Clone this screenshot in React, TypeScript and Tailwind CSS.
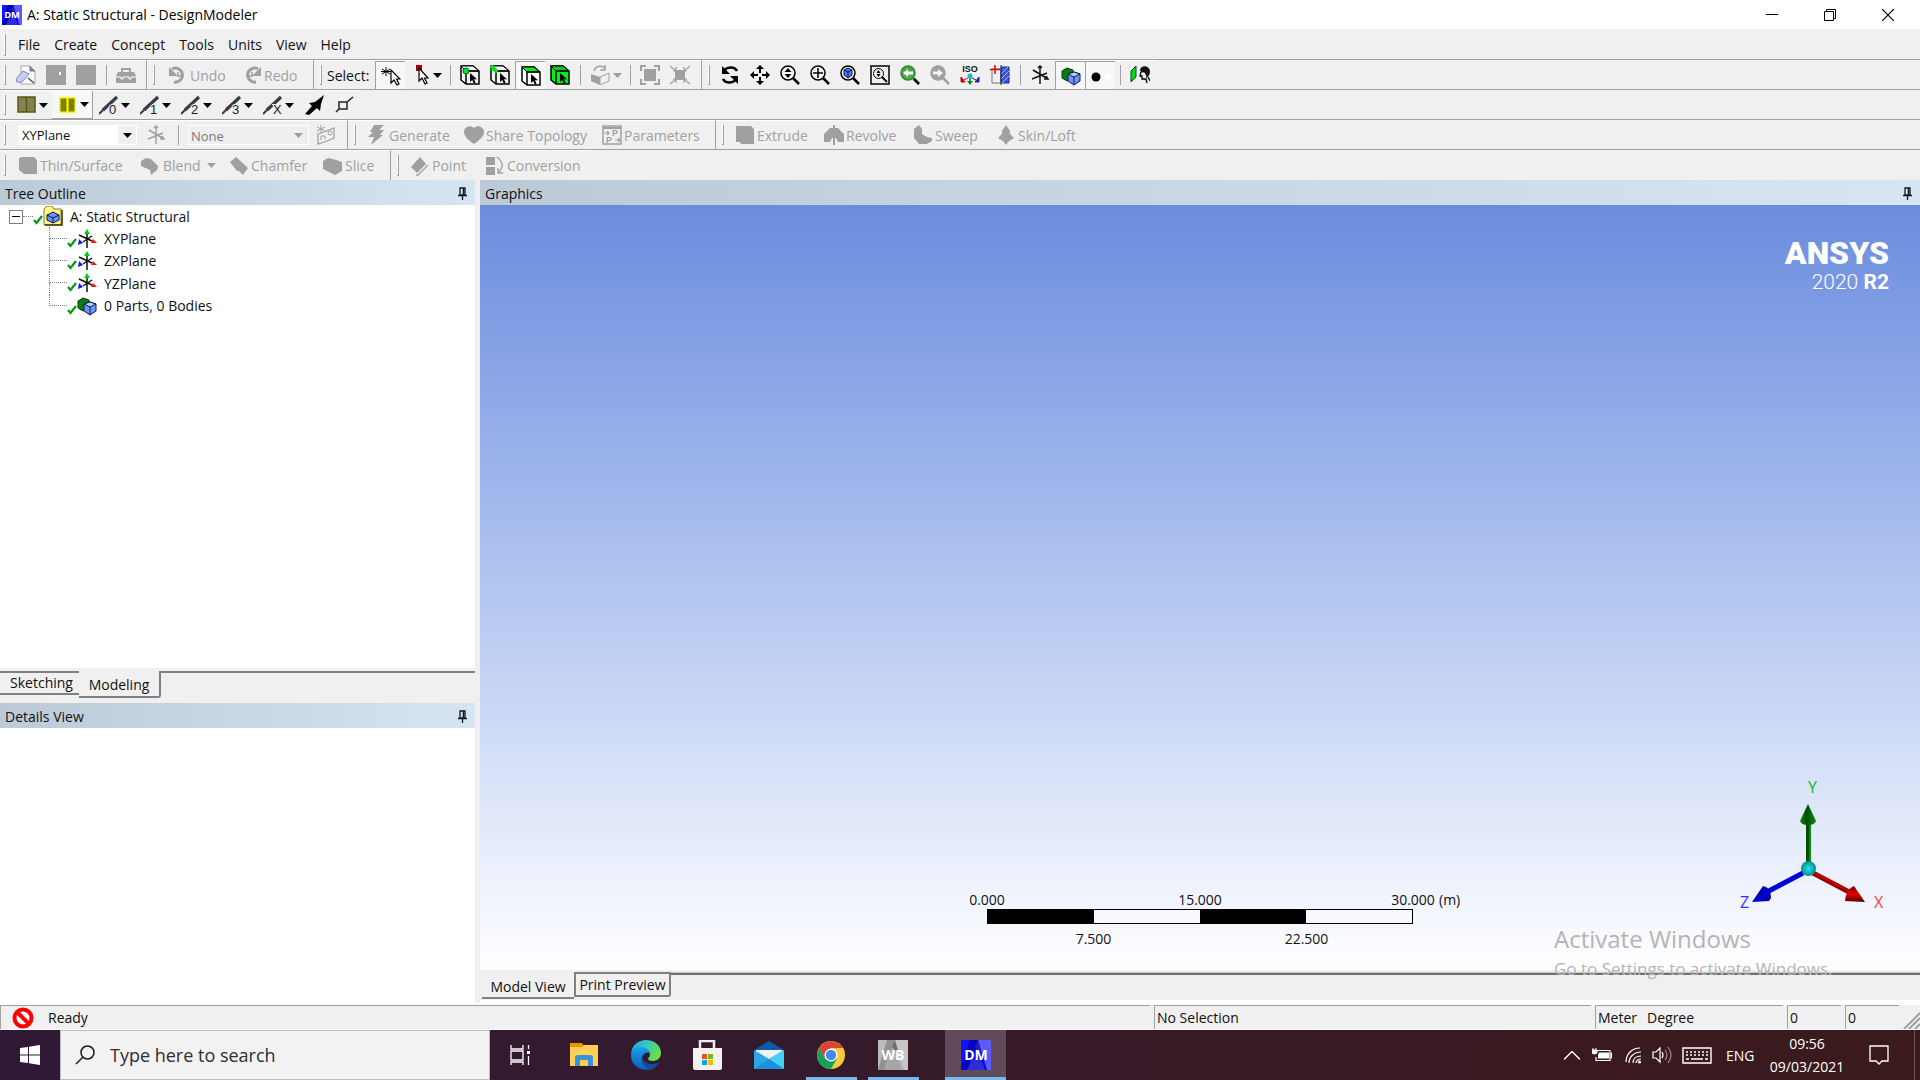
import type { ReactNode } from "react";

const GREY = "#a0a0a0";

/* ---------- helpers ---------- */

function Ico({ children, size = 20 }: { children: ReactNode; size?: number }) {
  return (
    <svg width={size} height={size} viewBox="0 0 20 20" fill="none" className="shrink-0" aria-hidden="true">
      {children}
    </svg>
  );
}

function Arrow({ color = "#000" }: { color?: string }) {
  return (
    <svg width="9" height="5" viewBox="0 0 9 5" className="shrink-0" aria-hidden="true">
      <path d="M0 0h9L4.500 5z" fill={color} />
    </svg>
  );
}

function Row({ children, last }: { children: ReactNode; last?: boolean }) {
  return (
    <div className={last ? "flex h-[30px] items-stretch" : "flex h-[30px] items-stretch border-b border-[#a0a0a0]"}>
      {children}
    </div>
  );
}

function Grip() {
  return <span className="my-1 ml-1 mr-[5px] w-[2px] shrink-0 border-r border-b border-[#a0a0a0] bg-white" />;
}

function Group({ children, open }: { children: ReactNode; open?: boolean }) {
  return (
    <div className={open ? "flex items-stretch border-t border-white" : "mr-[2px] flex items-stretch border-t border-r border-white border-r-[#a0a0a0]"}>
      <Grip />
      {children}
    </div>
  );
}

function Sep() {
  return (
    <span className="flex w-[10px] shrink-0 justify-center py-1">
      <span className="w-px bg-[#a0a0a0]" />
    </span>
  );
}

function Btn({ label, children, pressed }: { label: string; children: ReactNode; pressed?: boolean }) {
  return (
    <button
      type="button"
      aria-label={label}
      className={
        pressed
          ? "flex w-[30px] shrink-0 items-center justify-center border-t border-l border-[#a0a0a0] bg-[#f7f7f7]"
          : "flex w-[30px] shrink-0 items-center justify-center"
      }
    >
      <Ico>{children}</Ico>
    </button>
  );
}

function Drop({ label, children, width, raised, off }: { label: string; children: ReactNode; width: string; raised?: boolean; off?: boolean }) {
  return (
    <button
      type="button"
      aria-label={label}
      className={`flex shrink-0 items-center gap-[2px] pl-[6px] ${width} ${raised ? "border-r border-b border-[#a0a0a0] bg-[#f7f7f7]" : ""}`}
    >
      <Ico>{children}</Ico>
      <Arrow color={off ? GREY : "#000"} />
    </button>
  );
}

function TextBtn({ label, children, width, drop }: { label: string; children: ReactNode; width: string; drop?: boolean }) {
  return (
    <button
      type="button"
      className={`flex shrink-0 items-center gap-[2px] whitespace-nowrap pl-[6px] text-[14px] text-[#a0a0a0] ${width}`}
    >
      <Ico>{children}</Ico>
      <span>{label}</span>
      {drop && <span className="ml-1"><Arrow color={GREY} /></span>}
    </button>
  );
}

/* ---------- icon drawings ---------- */

const cursor = (x: number, y: number) => (
  <path transform={`translate(${x} ${y})`} d="M0 0v9l2.200-2 1.600 3.500 1.800-.8-1.600-3.400h3z" fill="#000" />
);

function SelectCube({ front = "#f0f0f0", top = "#f0f0f0", children }: { front?: string; top?: string; children?: ReactNode }) {
  return (
    <>
      <path d="M1 1h12l6 5v13H6l-5-4z" fill={front} stroke="#000" strokeWidth="1.500" />
      <path d="M1 1h12l6 5H6z" fill={top} stroke="#000" strokeWidth="1" />
      <path d="M6 6v13M6 6h13" stroke="#000" strokeWidth="1.500" />
      {children}
      {cursor(10, 8)}
    </>
  );
}

function Lens({ color = "#000", fill = "#f4f4f4", children }: { color?: string; fill?: string; children?: ReactNode }) {
  return (
    <>
      <circle cx="8" cy="8" r="7" fill={fill} stroke={color} strokeWidth="1.500" />
      <path d="M13 13l6 6" stroke={color} strokeWidth="2.500" />
      {children}
    </>
  );
}

function UpDown() {
  return <path d="M8 3l3.500 4h-7zM8 13l3.500-4h-7z" fill="#000" />;
}

function Cubes() {
  return (
    <>
      <path d="M1 5l5-3 6 2v8l-6 3-5-3z" fill="#0a7a12" stroke="#063d08" />
      <path d="M7 8l6-2 6 2v7l-6 4-6-4z" fill="#6a96fb" stroke="#101a50" />
      <path d="M7 8l6 3 6-3-6-2z" fill="#b6cbff" stroke="#101a50" />
      <path d="M13 11v8" stroke="#101a50" />
    </>
  );
}

function PlaneAxes() {
  return (
    <>
      <path d="M10 5v14M2 6l13 6M15 7l-9 6" stroke="#111" strokeWidth="1.500" />
      <path d="M10 0l3 5H7z" fill="#00c81e" />
      <path d="M20 14l-6 0 2-4z" fill="#f01414" />
      <path d="M1 16l1-6 4 4z" fill="#1414f0" />
    </>
  );
}

function Axes({ color }: { color: string }) {
  return <path d="M10 1v18M3 5l15 9M2 14l15-6M8 3l2-2 2 2M16 11l2 3-4 0" stroke={color} strokeWidth="1.500" />;
}

function Edge({ mark }: { mark: string }) {
  return (
    <>
      <path d="M4 15L18 2" stroke="#3c3c3c" strokeWidth="3.200" />
      <path d="M0 19L8 11" stroke="#3c3c3c" strokeWidth="2" />
      <text x="10" y="19" fontSize="13" fill="#222" stroke="#efefef" strokeWidth="2" paintOrder="stroke" fontFamily="Liberation Sans, sans-serif">{mark}</text>
    </>
  );
}

function Pin() {
  return (
    <svg width="10" height="14" viewBox="0 0 10 14" fill="none" aria-hidden="true">
      <path d="M3 1h5v7H3zM1 8.500h9M5.500 9v4" stroke="#15152a" strokeWidth="1.300" />
      <path d="M6.500 1v7" stroke="#15152a" strokeWidth="1.500" />
    </svg>
  );
}

function Check() {
  return (
    <svg width="10" height="10" viewBox="0 0 10 10" fill="none" className="mt-2 shrink-0" aria-hidden="true">
      <path d="M1 5l2.500 3L9 1" stroke="#0a9a14" strokeWidth="2.300" />
    </svg>
  );
}

function LogoTile({ text, size, grey }: { text: string; size: number; grey?: boolean }) {
  return (
    <svg width={size} height={size} viewBox="0 0 30 30" className="shrink-0" aria-hidden="true">
      <path d="M0 0h30v30H0z" fill={grey ? "#b4b4b4" : "#0606e8"} />
      <path d="M17 0h13v30H26z" fill={grey ? "#c6c6c6" : "#5a5aff"} />
      <path d="M9 0h8L6 30H0z" fill={grey ? "#919191" : "#0404b8"} />
      <path d="M0 0h9L0 26z" fill={grey ? "#bcbcbc" : "#1212ff"} />
      <path d="M17 0l4 14-4-3-3-4z" fill={grey ? "#6e6e6e" : "#2222a8"} />
      <path d="M6 30l5-11h9l4 11z" fill={grey ? "#a6a6a6" : "#2d2dd8"} />
      <text x="15" y="20" fontSize="14" fontWeight="700" textAnchor="middle" fill="#fff" fontFamily="Open Sans, sans-serif">{text}</text>
    </svg>
  );
}

/* ---------- panels ---------- */

function PanelHeader({ title }: { title: string }) {
  return (
    <header className="flex h-[25px] shrink-0 items-center justify-between bg-linear-to-r from-[#bccad8] to-[#d7e5f2] pt-[2px] pr-2 pl-[5px] text-[14px]">
      <h2>{title}</h2>
      <button type="button" aria-label={`Pin ${title}`}><Pin /></button>
    </header>
  );
}

function TreeItem({ label, children, last }: { label: string; children: ReactNode; last?: boolean }) {
  return (
    <li className="flex items-stretch pl-[49px]">
      <span className="flex w-[18px] shrink-0 flex-col">
        <span className="h-1/2 border-b border-l border-dotted border-[#808080]" />
        <span className={last ? "h-1/2" : "h-1/2 border-l border-dotted border-[#808080]"} />
      </span>
      <span className="flex items-center">
        <Check />
        <Ico>{children}</Ico>
        <span className="ml-[7px]">{label}</span>
      </span>
    </li>
  );
}

const menus = ["File", "Create", "Concept", "Tools", "Units", "View", "Help"];
const edges = ["0", "1", "2", "3", "X"];

function Toolbars() {
  return (
    <>
      <div className="flex h-[31px] items-stretch border-b border-[#a0a0a0]">
        <nav className="flex items-center pt-px text-[14px]">
          <span className="mr-[12px] ml-1 h-[22px] w-[2px] border-r border-b border-[#a0a0a0] bg-white" />
          <ul className="flex gap-[14px]">
            {menus.map((m) => (
              <li key={m}><button type="button">{m}</button></li>
            ))}
          </ul>
        </nav>
      </div>

      <Row>
        <Group>
          <Btn label="New">
            <path d="M5 1h9l5 5v13H5z" fill="#fafafa" stroke="#a8a8a8" />
            <path d="M14 1v5h5" fill="#888" stroke="#777" />
            <path d="M0 14l7-8 6 3-7 8-5 0z" fill="#c9cdf0" stroke="#8085b8" />
            <path d="M12 13l6 5" stroke="#555" strokeWidth="1.500" />
          </Btn>
          <Btn label="Open"><path d="M0 0h20v20H0z" fill={GREY} /><path d="M13 7h2v3h-2z" fill="#fff" /></Btn>
          <Btn label="Save"><path d="M0 0h20v20H0z" fill={GREY} /></Btn>
          <Sep />
          <Btn label="Toolbox">
            <path d="M6 8V4h8v4" stroke={GREY} strokeWidth="2" />
            <path d="M2 7h16l2 4v7H0v-7z" fill={GREY} />
            <path d="M0 12h5v2h2v-2h6v2h2v-2h5" stroke="#fff" />
          </Btn>
          <span className="w-[5px]" />
        </Group>
        <Group>
          <span className="w-[2px]" />
          <TextBtn label="Undo" width="w-[74px]">
            <path d="M4 4a7 7 0 1 1 2 13" stroke={GREY} strokeWidth="3" />
            <path d="M1 2v9h9z" fill={GREY} /><path d="M10 7v4h3" stroke={GREY} strokeWidth="1.500" />
          </TextBtn>
          <TextBtn label="Redo" width="w-[77px]">
            <path d="M16 4a7 7 0 1 0-2 13" stroke={GREY} strokeWidth="3" />
            <path d="M19 2v9h-9z" fill={GREY} /><path d="M10 7v4H7" stroke={GREY} strokeWidth="1.500" />
          </TextBtn>
        </Group>
        <Group>
          <span className="flex w-[48px] shrink-0 items-center text-[14px]">Select:</span>
          <Btn label="New selection" pressed>
            <path d="M5 1v9M1 3l8 5M9 3L1 8M0 5.500h10" stroke="#000" strokeWidth="1" />
            <path d="M10 4v13l3-3 3 5 2-1-2.500-5H19z" fill="#fff" stroke="#000" strokeWidth="1.200" />
          </Btn>
          <Drop label="Selection mode" width="w-[40px]">
            <path d="M5 0h6v6H5z" fill="#b00000" />
            <path d="M8 3v13l3-3 3 6 2-1-2.500-5H17z" fill="#fff" stroke="#000" strokeWidth="1.200" />
          </Drop>
          <Sep />
          <Btn label="Select points"><SelectCube><circle cx="6" cy="6" r="3" fill="#00e614" stroke="#063" /></SelectCube></Btn>
          <Btn label="Select edges"><SelectCube><path d="M1 1l6 6" stroke="#00e614" strokeWidth="4" /></SelectCube></Btn>
          <Btn label="Select faces" pressed><SelectCube front="#fff" top="#00f014" /></Btn>
          <Btn label="Select bodies"><SelectCube front="#00f014" top="#00d010" /></Btn>
          <Sep />
          <Drop label="Extend selection" width="w-[40px]" off>
            <path d="M0 9l9 3v8l-9-4z" fill={GREY} /><path d="M9 12l9-4v8l-9 4z" stroke={GREY} />
            <path d="M3 6c2-6 9-6 11-2M14 0v5h-5" stroke={GREY} strokeWidth="1.500" />
          </Drop>
          <Sep />
          <Btn label="Expand">
            <path d="M4 4h12v12H4z" fill={GREY} />
            <path d="M1 6V1h5M14 1h5v5M19 14v5h-5M6 19H1v-5" stroke={GREY} strokeWidth="2" />
          </Btn>
          <Btn label="Shrink">
            <path d="M5 5h10v10H5z" fill={GREY} />
            <path d="M0 1l6 5M20 1l-6 5M0 19l6-5M20 19l-6-5M3 6h3V2M17 6h-3V2M3 14h3v4M17 14h-3v4" stroke={GREY} strokeWidth="1.200" />
          </Btn>
          <span className="w-[6px]" />
        </Group>
        <Group open>
          <Btn label="Rotate">
            <path d="M4 5c5-4 11-3 13 1M16 15c-5 4-11 3-13-1" stroke="#000" strokeWidth="2.500" />
            <path d="M2 1v8h8zM18 19v-8h-8z" fill="#000" />
          </Btn>
          <Btn label="Pan">
            <path d="M10 0l4 4H6zM10 20l4-4H6zM0 10l4-4v8zM20 10l-4-4v8z" fill="#000" />
            <path d="M10 4v4M10 12v4M4 10h4M12 10h4" stroke="#000" strokeWidth="2" />
          </Btn>
          <Btn label="Zoom"><Lens><UpDown /></Lens></Btn>
          <Btn label="Box zoom"><Lens><path d="M8 3v10M3 8h10" stroke="#000" strokeWidth="1.500" /></Lens></Btn>
          <Btn label="Zoom to fit">
            <Lens>
              <path d="M4 5l4-2 4 2v5l-4 3-4-3z" fill="#4a7af0" stroke="#0a1550" />
              <path d="M4 5l4 2 4-2M8 7v6" stroke="#0a1550" />
            </Lens>
          </Btn>
          <Btn label="Magnifier window">
            <path d="M1 1h18v18H1z" stroke="#000" strokeWidth="1.500" />
            <circle cx="8.500" cy="8.500" r="5" stroke="#000" /><path d="M12 12l5 5" stroke="#000" strokeWidth="1.800" />
            <path d="M8.500 5l2 3h-4zM8.500 12l2-3h-4z" fill="#000" />
          </Btn>
          <Btn label="Previous view">
            <Lens color="#2f8a2c" fill="#4ca844" />
            <path d="M3 8l5-4v2.500h5v3H8V12z" fill="#fff" /><path d="M14 14l5 5" stroke="#111" strokeWidth="2.500" />
          </Btn>
          <Btn label="Next view">
            <Lens color={GREY} fill={GREY} /><path d="M13 8L8 4v2.500H3v3h5V12z" fill="#f4f4f4" />
          </Btn>
          <Btn label="Isometric view">
            <text x="10" y="7" fontSize="9" fontWeight="700" textAnchor="middle" fill="#111" fontFamily="Liberation Sans, sans-serif">ISO</text>
            <circle cx="10" cy="11" r="2.500" fill="#18b8c8" />
            <path d="M10 13v3" stroke="#0a8a14" strokeWidth="1.500" /><path d="M7 16h6l-3 4z" fill="#0a8a14" />
            <path d="M8 13l-4 2M1 12v5h4z" stroke="#c00" fill="#c00" /><path d="M12 13l4 2M19 12v5h-4z" stroke="#12b" fill="#12b" />
          </Btn>
          <Btn label="Display plane">
            <path d="M2 4h9v14H2z" stroke="#777" /><path d="M11 2h8v16h-8z" fill="#3a55d8" stroke="#122a90" />
            <path d="M11 9l7-7M11 14l8-8M12 18l7-7" stroke="#a8bafa" />
            <path d="M5 0v9M0 4.500h10" stroke="#e00000" strokeWidth="1.500" /><path d="M11 0v20" stroke="#333" />
          </Btn>
          <Sep />
          <Btn label="Display axes"><Axes color="#111" /></Btn>
          <Btn label="Display model" pressed><Cubes /></Btn>
          <Btn label="Display points" pressed><circle cx="5" cy="11" r="4.500" fill="#000" /><circle cx="17" cy="11" r="4" fill="#fff" /></Btn>
          <Sep />
          <Btn label="Look at face">
            <path d="M1 6l5-5v11l-5 5z" fill="#00d81a" stroke="#042" />
            <path d="M11 7l-1 4h2v3h4l1 4M18 12l2 4" stroke="#000" strokeWidth="1.300" />
            <path d="M10 5c1-5 9-5 10 1 0 4-2 6-4 7 1-3-1-4-2-6-1 1-3 1-4-2z" fill="#111" />
          </Btn>
        </Group>
      </Row>

      <Row>
        <Group open>
          <Drop label="Face colour" width="w-[41px]">
            <path d="M1 2h17v15H1z" fill="#82825a" stroke="#5a5a00" strokeWidth="1.500" /><path d="M9.500 2v15" stroke="#5a5a00" strokeWidth="1.500" />
          </Drop>
          <Drop label="Edge colour" width="w-[41px]" raised>
            <path d="M1 2h17v16H1z" fill="#ffff00" /><path d="M2.500 3.500h6v13h-6zM10.500 3.500h6v13h-6z" fill="#808000" />
          </Drop>
          {edges.map((e) => (
            <Drop key={e} label={`Edge ${e}`} width="w-[41px]"><Edge mark={e} /></Drop>
          ))}
          <span className="w-[2px]" />
          <Btn label="Edge direction"><path d="M0 19l7-8-3-3 6-1 9-7-3 9-1 7-3-3-8 7z" fill="#000" /></Btn>
          <Btn label="Show vertices"><path d="M4 7h8v7H4zM1 17l3-3M12 7l6-5" stroke="#222" strokeWidth="1.500" /></Btn>
        </Group>
      </Row>

      <Row>
        <Group>
          <span className="relative my-1 ml-[7px] flex w-[119px] shrink-0">
            <select aria-label="Active plane" className="w-full appearance-none bg-white pt-px pl-1 text-[13px]" defaultValue="XYPlane">
              <option>XYPlane</option>
            </select>
            <span className="pointer-events-none absolute top-px right-px bottom-px flex w-[18px] items-center justify-center bg-[#efefef]"><Arrow /></span>
          </span>
          <span className="w-[4px]" />
          <Btn label="New plane"><Axes color={GREY} /></Btn>
          <span className="w-[2px]" />
          <Sep />
          <span className="relative my-1 ml-[5px] flex w-[121px] shrink-0">
            <select aria-label="Active sketch" disabled className="w-full appearance-none border border-white bg-[#efefef] pt-px pl-[2px] text-[13px] text-[#7a7a7a] opacity-100" defaultValue="None">
              <option>None</option>
            </select>
            <span className="pointer-events-none absolute top-0 right-[6px] bottom-0 flex items-center"><Arrow color={GREY} /></span>
          </span>
          <span className="w-[2px]" />
          <Btn label="New sketch">
            <path d="M2 9l6-2 10-4v10l-7 3-9 3z" stroke={GREY} strokeWidth="1.300" /><circle cx="14" cy="8" r="2" stroke={GREY} />
            <path d="M5 0v8M1 2l8 4M9 2L1 6" stroke={GREY} /><path d="M5 15v-4h4v3" stroke={GREY} />
          </Btn>
          <span className="w-[6px]" />
        </Group>
        <Group>
          <TextBtn label="Generate" width="w-[97px]"><path d="M7 0h10l-5 5h5l-4 5h3L4 20l3-8H1l5-5H3z" fill={GREY} /></TextBtn>
          <TextBtn label="Share Topology" width="w-[138px]"><path d="M10 3c4-4 10-1 10 4 0 4-4 8-10 12C4 15 0 11 0 7 0 2 6-1 10 3z" fill={GREY} /></TextBtn>
          <TextBtn label="Parameters" width="w-[119px]">
            <path d="M1 1h18v18H1z" stroke={GREY} strokeWidth="1.500" /><path d="M1 3h18" stroke={GREY} strokeWidth="2" />
            <path d="M2 8h5M5 6l2 2-2 2M13 15h5M16 13l2 2-2 2" stroke={GREY} strokeWidth="1.200" />
            <text x="10" y="11" fontSize="9" fontWeight="700" fill={GREY} fontFamily="Liberation Sans, sans-serif">P</text>
            <text x="4" y="18" fontSize="9" fontWeight="700" fill={GREY} fontFamily="Liberation Sans, sans-serif">P</text>
          </TextBtn>
        </Group>
        <Group open>
          <TextBtn label="Extrude" width="w-[89px]"><path d="M1 1h15l3 3v15H6l-1-2H1z" fill={GREY} /></TextBtn>
          <TextBtn label="Revolve" width="w-[89px]"><path d="M0 17v-8l6-6h3V0h2v3h3l6 6v8h-6l-2-4h-1v7h-2v-7H8l-2 4z" fill={GREY} /></TextBtn>
          <TextBtn label="Sweep" width="w-[83px]"><path d="M1 4l5-4 3 4v5l5 3 5 1v3l-5 3H6l-5-6z" fill={GREY} /></TextBtn>
          <TextBtn label="Skin/Loft" width="w-[90px]"><path d="M10 0l4 6v3l4 4-5 3-3 4-3-4-5-3 4-4V6z" fill={GREY} /></TextBtn>
        </Group>
      </Row>

      <Row last>
        <Group>
          <span className="w-[1px]" />
          <TextBtn label="Thin/Surface" width="w-[123px]"><path d="M1 2l3-1h12l3 3v14H6l-5-4z" fill={GREY} /></TextBtn>
          <TextBtn label="Blend" width="w-[88px]" drop><path d="M0 5l5-3 5 1 7 7-1 4-6 5-1-5-9-4z" fill={GREY} /></TextBtn>
          <TextBtn label="Chamfer" width="w-[94px]"><path d="M1 6l6-5 12 11-5 7-4-4-2 0z" fill={GREY} /></TextBtn>
          <TextBtn label="Slice" width="w-[73px]"><path d="M0 5l5-3 5 1 9 3v9l-7 4-6-3-6-3z" fill={GREY} /></TextBtn>
        </Group>
        <Group open>
          <TextBtn label="Point" width="w-[75px]"><path d="M1 11L10 1l6 7-9 9z" fill={GREY} /><path d="M6 19l2 0L18 9" stroke={GREY} strokeWidth="1.300" /></TextBtn>
          <TextBtn label="Conversion" width="w-[110px]">
            <path d="M1 1h9v8H1zM1 11h9v8H1z" fill={GREY} /><path d="M12 1c6 5 7 9 2 15M13 12v5h5" stroke={GREY} strokeWidth="1.300" />
          </TextBtn>
        </Group>
      </Row>
    </>
  );
}

function LeftPane() {
  return (
    <div className="flex w-[475px] shrink-0 flex-col">
      <PanelHeader title="Tree Outline" />
      <section className="flex flex-1 flex-col bg-white text-[14px]">
        <ul className="grid h-[112px] grid-rows-5">
          <li className="flex items-center pl-[9px]">
            <button type="button" aria-label="Collapse" className="mt-px flex h-[14px] w-[14px] items-center justify-center border border-[#808080] bg-white">
              <span className="h-px w-2 bg-black" />
            </button>
            <span className="w-[10px] border-t border-dotted border-[#808080]" />
            <Check />
            <Ico>
              <path d="M1 3l3-3h5l2 3h7v16H1z" fill="#fff68c" stroke="#8a7a10" /><path d="M19 4v15H2" stroke="#3c3408" strokeWidth="1.500" />
              <path d="M4 9l6-3 6 3v5l-6 3-6-3z" fill="#6a96fb" stroke="#0a1550" /><path d="M4 9l6 3 6-3M10 12v5" stroke="#0a1550" />
            </Ico>
            <span className="ml-[7px]">A: Static Structural</span>
          </li>
          <TreeItem label="XYPlane"><PlaneAxes /></TreeItem>
          <TreeItem label="ZXPlane"><PlaneAxes /></TreeItem>
          <TreeItem label="YZPlane"><PlaneAxes /></TreeItem>
          <TreeItem label="0 Parts, 0 Bodies" last><Cubes /></TreeItem>
        </ul>
      </section>
      <div className="flex h-[35px] shrink-0 items-start pt-[3px] text-[14px]">
        <button type="button" className="h-[24px] w-[79px] border-t-2 border-b-2 border-[#808080] pl-1 leading-[20px]">Sketching</button>
        <button type="button" className="h-[27px] w-[82px] rounded-br-[3px] border-r-2 border-b-2 border-[#808080] pt-[3px] leading-[20px]">Modeling</button>
        <span className="h-[2px] flex-1 bg-[#808080]" />
      </div>
      <PanelHeader title="Details View" />
      <section className="h-[275px] shrink-0 bg-white" />
    </div>
  );
}

function ScaleBar() {
  return (
    <div className="absolute bottom-[22px] left-1/2 w-[426px] -translate-x-1/2 text-[14px] leading-[18px]">
      <div className="flex justify-between">
        <span className="flex w-0 justify-center">0.000</span>
        <span className="flex w-0 justify-center">15.000</span>
        <span className="relative flex w-0 justify-center">30.000<span className="absolute left-[26px]">(m)</span></span>
      </div>
      <div className="grid h-[15px] grid-cols-4 border border-black bg-[#f8f9fe]">
        <span className="bg-black" /><span /><span className="bg-black" /><span />
      </div>
      <div className="flex justify-around pt-[6px]">
        <span className="flex w-0 justify-center">7.500</span>
        <span className="flex w-0 justify-center">22.500</span>
      </div>
    </div>
  );
}

function Triad() {
  return (
    <svg width="150" height="146" viewBox="0 -10 150 146" className="absolute right-[33px] bottom-[50px]" role="img" aria-label="Coordinate axes">
      <defs>
        <linearGradient id="gy"><stop offset="0" stopColor="#0a9a0a" /><stop offset=".4" stopColor="#004a00" /><stop offset="1" stopColor="#0a9010" /></linearGradient>
        <linearGradient id="gx" x2="0" y2="1"><stop offset="0" stopColor="#700000" /><stop offset=".5" stopColor="#e80000" /><stop offset="1" stopColor="#500000" /></linearGradient>
        <linearGradient id="gz" x2="1" y2="1"><stop offset="0" stopColor="#000080" /><stop offset=".6" stopColor="#0000d0" /><stop offset="1" stopColor="#000070" /></linearGradient>
        <radialGradient id="gs"><stop offset="0" stopColor="#20e8e8" /><stop offset="1" stopColor="#068a90" /></radialGradient>
      </defs>
      <path d="M69 40h5v45h-5z" fill="#004d00" /><path d="M72 40h2v45h-2z" fill="#0a8a10" />
      <path d="M71 20l8 17q-1 4-8 4t-8-4z" fill="url(#gy)" />
      <path d="M76 89l38 20" stroke="#900000" strokeWidth="5" /><path d="M76 88l38 20" stroke="#c80000" strokeWidth="2" />
      <path d="M128 118l-11-16q-8 3-9 15z" fill="url(#gx)" />
      <path d="M66 89L28 109" stroke="#0000d8" strokeWidth="5" />
      <path d="M15 118l11-16q8 1 8 12l-2 3z" fill="url(#gz)" />
      <circle cx="71.500" cy="84.500" r="7.500" fill="url(#gs)" />
      <g fontSize="16" fontFamily="Open Sans, sans-serif">
        <text x="71" y="9" fill="#1cb41c">Y</text>
        <text x="137" y="124" fill="#ff4040">X</text>
        <text x="3" y="124" fill="#3030ff">Z</text>
      </g>
    </svg>
  );
}

function GraphicsPane() {
  return (
    <div className="flex min-w-0 flex-1 flex-col">
      <PanelHeader title="Graphics" />
      <section className="relative flex-1 bg-linear-to-b from-[#6b8cde] to-white">
        <div className="absolute top-[30px] right-[31px] flex flex-col items-end font-[Roboto,sans-serif] text-white">
          <span className="text-[32px] leading-[36px] font-black">ANSYS</span>
          <span className="text-[21px] leading-[22px]"><span className="font-light">2020</span> <b>R2</b></span>
        </div>
        <ScaleBar />
        <Triad />
        <div className="absolute right-[83px] -bottom-[12px] z-10 w-[283px] whitespace-nowrap text-[#b4b4b4]">
          <p className="text-[24px] leading-[34px]">Activate Windows</p>
          <p className="text-[17px] leading-[26px]">Go to Settings to activate Windows.</p>
        </div>
      </section>
      <div className="flex h-[30px] shrink-0 items-start text-[14px]">
        <button type="button" className="ml-[2px] h-[29px] w-[92px] border-b-2 border-[#808080] pt-[6px] leading-[20px]">Model View</button>
        <button type="button" className="mt-[2px] h-[25px] w-[97px] rounded-br-[3px] border-2 border-[#808080] pt-px leading-[20px]">Print Preview</button>
        <span className="mt-[2px] h-[3px] flex-1 border-t border-b-2 border-t-[#c8c8c8] border-b-[#707070]" />
      </div>
      <span className="h-[3px] shrink-0 bg-white" />
    </div>
  );
}

const cell = "border-t border-l border-[#a0a0a0] pl-[2px] flex items-center";

function StatusBar() {
  return (
    <footer className="flex h-[27px] shrink-0 gap-1 border-t-2 border-b border-white text-[14px] whitespace-nowrap">
      <div className="flex flex-1 items-center gap-[14px] border-t border-l border-[#a0a0a0] pl-[11px]">
        <svg width="22" height="22" viewBox="0 0 22 22" fill="none" aria-hidden="true">
          <circle cx="11" cy="11" r="8.500" fill="#fff" stroke="#f00" strokeWidth="4" /><path d="M5 5l12 12" stroke="#f00" strokeWidth="4" />
        </svg>
        <span>Ready</span>
      </div>
      <div className={`w-[437px] ${cell}`}>No Selection</div>
      <div className={`w-[188px] gap-[10px] ${cell}`}><span>Meter</span><span>Degree</span></div>
      <div className={`w-[54px] ${cell}`}>0</div>
      <div className={`w-[54px] ${cell}`}>0</div>
      <svg width="17" height="24" viewBox="0 0 17 24" fill="none" aria-hidden="true">
        <path d="M1 24L17 8M6 24L17 13M12 24l5-5" stroke="#a0a0a0" strokeWidth="2" />
      </svg>
    </footer>
  );
}

function Task({ label, children, state, width }: { label: string; children: ReactNode; state?: "open" | "active"; width: string }) {
  return (
    <button
      type="button"
      aria-label={label}
      className={`flex shrink-0 flex-col items-center ${width} ${state === "active" ? "bg-[#634a5a]" : ""}`}
    >
      <span className="flex flex-1 items-center justify-center pt-[3px]">{children}</span>
      <span className={state === "open" ? "h-[3px] w-[51px] bg-[#76b9ed]" : state === "active" ? "h-[3px] w-full bg-[#76b9ed]" : "h-[3px]"} />
    </button>
  );
}

function Taskbar() {
  return (
    <div className="flex h-[50px] shrink-0 bg-linear-to-r from-[#2f1936] via-[#381a25] via-65% to-[#3b1a1b] text-white">
      <button type="button" aria-label="Start" className="flex w-[60px] shrink-0 items-center justify-center">
        <svg width="20" height="20" viewBox="0 0 20 20" fill="#fff" aria-hidden="true">
          <path d="M0 3l8-1v7.500H0zM9 1.800L20 0v9.500H9zM0 10.500h8V18l-8-1zM9 10.500h11V20L9 18.200z" />
        </svg>
      </button>
      <label className="flex w-[430px] shrink-0 items-center gap-[15px] border border-[#bdbdbd] bg-[#f2f2f2] pl-[14px]">
        <svg width="20" height="20" viewBox="0 0 20 20" fill="none" aria-hidden="true">
          <circle cx="12.500" cy="7.500" r="6.500" stroke="#1a1a1a" strokeWidth="1.500" /><path d="M8 12l-7 7" stroke="#1a1a1a" strokeWidth="1.500" />
        </svg>
        <input type="text" aria-label="Search" placeholder="Type here to search" className="min-w-0 flex-1 bg-transparent text-[18px] text-black outline-none placeholder:text-[#2e2e2e]" />
      </label>
      <Task label="Task view" width="w-[60px]">
        <svg width="20" height="20" viewBox="0 0 20 20" fill="none" stroke="#fff" strokeWidth="1.300" aria-hidden="true">
          <path d="M1 0v4h12V0M1 6h12v9H1zM1 20v-3h12v3M18.500 0v4M18.500 11v9" /><path d="M17 6h3v3h-3z" fill="#fff" stroke="none" />
        </svg>
      </Task>
      <span className="w-1" />
      <Task label="File Explorer" width="w-[60px]">
        <svg width="28" height="24" viewBox="0 0 28 24" aria-hidden="true">
          <path d="M0 0h12l2 3v4H0z" fill="#e09a00" /><path d="M0 4h12l2-2h14v21H0z" fill="#ffcf55" />
          <path d="M5 23V15q0-3 3-3h12q3 0 3 3v8h-5v-6h-8v6z" fill="#3a94d8" />
        </svg>
      </Task>
      <span className="w-[2px]" />
      <Task label="Microsoft Edge" width="w-[60px]">
        <svg width="30" height="30" viewBox="0 0 30 30" aria-hidden="true">
          <defs>
            <linearGradient id="eg" x2="1" y2=".4"><stop offset="0" stopColor="#1f9bdc" /><stop offset=".5" stopColor="#34c6c6" /><stop offset="1" stopColor="#6ae048" /></linearGradient>
            <linearGradient id="eb" x2="0" y2="1"><stop offset="0" stopColor="#1ba0e6" /><stop offset="1" stopColor="#0a5fc0" /></linearGradient>
          </defs>
          <path d="M0 14C1 5 7 0 15 0c9 0 15 6 15 13 0 5-4 8-8 8-3 0-5-1-5-2 0-1 2-2 2-5 0-3-4-6-8-6-5 0-9 2-11 6z" fill="url(#eg)" />
          <path d="M0 15C1 10 5 7 10 7c5 0 9 3 9 7-2-3-8-1-8 5 0 7 7 10 10 10-9 3-21-2-21-14z" fill="url(#eb)" />
          <path d="M11 17c-2 7 5 13 11 12 3-2 6-5 6-7-6 4-16 2-17-5z" fill="#0d4f98" />
        </svg>
      </Task>
      <span className="w-[1px]" />
      <Task label="Microsoft Store" width="w-[60px]">
        <svg width="30" height="30" viewBox="0 0 30 30" aria-hidden="true">
          <path d="M8 10V1h14v9" fill="none" stroke="#eee" strokeWidth="2.500" /><path d="M1 8h29v20q0 2-2 2H3q-2 0-2-2z" fill="#f1f1f1" />
          <path d="M10 14h5v5h-5z" fill="#f25022" /><path d="M16 14h5v5h-5z" fill="#7fba00" /><path d="M10 20h5v5h-5z" fill="#00a4ef" /><path d="M16 20h5v5h-5z" fill="#ffb900" />
        </svg>
      </Task>
      <span className="w-[2px]" />
      <Task label="Mail" width="w-[60px]">
        <svg width="30" height="28" viewBox="0 0 30 28" aria-hidden="true">
          <path d="M0 9L15 0l15 9v6H0z" fill="#0a5ba8" /><path d="M2 9h26v10H2z" fill="#f2f2f2" />
          <path d="M0 9l15 9 15-9v19H0z" fill="#2ba6e6" /><path d="M30 9v19L15 18z" fill="#46d0f8" /><path d="M0 28l15-10 15 10z" fill="#1f90dc" />
        </svg>
      </Task>
      <span className="w-[2px]" />
      <Task label="Google Chrome" width="w-[60px]" state="open">
        <svg width="28" height="28" viewBox="0 0 28 28" aria-hidden="true">
          <circle cx="14" cy="14" r="14" fill="#fcc938" /><path d="M1.900 7A14 14 0 0 1 26.100 7H14l-6 10z" fill="#dc4437" />
          <path d="M1.900 7A14 14 0 0 0 14 28l6-10.500L8 17.500z" fill="#1a9f5a" />
          <circle cx="14" cy="14" r="6.500" fill="#fff" /><circle cx="14" cy="14" r="5.200" fill="#4587f4" />
        </svg>
      </Task>
      <span className="w-[2px]" />
      <Task label="Workbench" width="w-[60px]" state="open"><LogoTile text="WB" size={30} grey /></Task>
      <span className="w-[22px]" />
      <Task label="DesignModeler" width="w-[61px]" state="active"><LogoTile text="DM" size={30} /></Task>
      <span className="flex-1" />
      <div className="flex shrink-0 items-center text-[14px]">
        <svg width="16" height="9" viewBox="0 0 16 9" fill="none" aria-hidden="true"><path d="M0 8.500l8-8 8 8" stroke="#fff" strokeWidth="1.400" /></svg>
        <svg width="20" height="14" viewBox="0 0 20 14" fill="none" className="ml-3" aria-hidden="true">
          <path d="M5 2.500h13v10H4V9" stroke="#fff" strokeWidth="1.200" /><path d="M7 4.500h10v6H6V7z" fill="#fff" /><path d="M19 5h1v5h-1zM0 2h5v3q-2.500 2-5 0zM1 0v2M4 0v2" fill="#fff" stroke="#fff" />
        </svg>
        <svg width="17" height="17" viewBox="0 0 17 17" fill="none" className="ml-[13px]" stroke="#fff" strokeWidth="1.200" aria-hidden="true">
          <path d="M1 15C1 7 7 1 15 1M4 16C4 10 9 5 16 5M8 16c0-4 3-7 8-7M11 16c0-2 2-4 5-4" /><circle cx="14.500" cy="15" r="1.500" fill="#fff" stroke="none" />
        </svg>
        <svg width="21" height="18" viewBox="0 0 21 18" fill="none" className="ml-[10px]" stroke="#fff" strokeWidth="1.200" aria-hidden="true">
          <path d="M1 6h3l4-4v14l-4-4H1zM10 6q2 3 0 6" /><path d="M13 4q4 5 0 10M16 1q6 8 0 16" opacity=".5" />
        </svg>
        <svg width="30" height="17" viewBox="0 0 30 17" fill="none" className="ml-[9px]" stroke="#fff" aria-hidden="true">
          <path d="M1 1h28v15H1z" strokeWidth="1.400" /><path d="M4 5h22M4 8h22" strokeDasharray="2 2" strokeWidth="1.300" /><path d="M4 12h3M9 12h12M23 12h3" strokeWidth="1.300" />
        </svg>
        <span className="ml-[14px] w-[28px] text-center">ENG</span>
        <div className="w-[106px] text-center leading-[23px]"><p>09:56</p><p>09/03/2021</p></div>
        <svg width="20" height="20" viewBox="0 0 20 20" fill="none" className="ml-[9px] mr-[25px]" aria-hidden="true"><path d="M1 1h18v15h-6l-3 3-3-3H1z" stroke="#fff" strokeWidth="1.300" /></svg>
      </div>
      <span className="mr-[5px] w-px bg-[#6d5555]" />
    </div>
  );
}

export default function App() {
  return (
    <div className="flex min-h-screen flex-col bg-[#f0f0f0] font-['Open_Sans',sans-serif] text-[#111]">
      <header className="flex h-[29px] shrink-0 items-center bg-white pl-[2px]">
        <LogoTile text="DM" size={20} />
        <h1 className="ml-[5px] flex-1 text-[14px] text-black">A: Static Structural - DesignModeler</h1>
        <button type="button" aria-label="Minimize" className="flex w-[58px] justify-center"><span className="h-px w-3 bg-black" /></button>
        <button type="button" aria-label="Restore" className="flex w-[58px] justify-center">
          <svg width="12" height="12" viewBox="0 0 12 12" fill="none" stroke="#000" aria-hidden="true"><path d="M.5 2.500h9v9h-9zM2.500 2.500v-2h9v9h-2" /></svg>
        </button>
        <button type="button" aria-label="Close" className="mr-[3px] flex w-[58px] justify-center">
          <svg width="12" height="12" viewBox="0 0 12 12" fill="none" stroke="#000" strokeWidth="1.200" aria-hidden="true"><path d="M0 0l12 12M12 0L0 12" /></svg>
        </button>
      </header>
      <div className="flex shrink-0 flex-col"><Toolbars /></div>
      <main className="flex flex-1 gap-[5px]">
        <LeftPane />
        <GraphicsPane />
      </main>
      <StatusBar />
      <Taskbar />
    </div>
  );
}
